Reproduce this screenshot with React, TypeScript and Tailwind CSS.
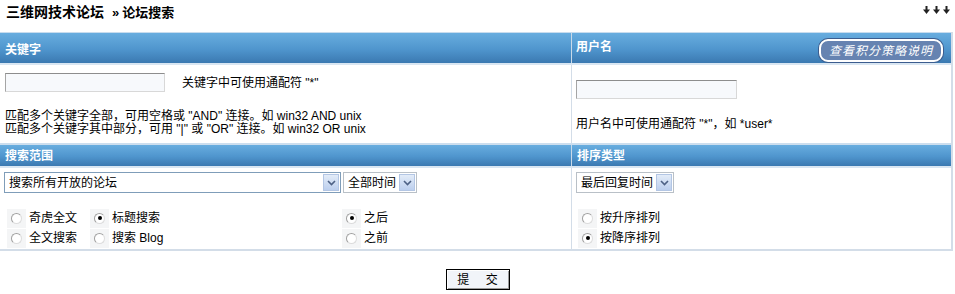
import React from "react";

const font = "font-['Liberation_Sans','Noto_Sans_CJK_SC',sans-serif]";

function Chevron() {
  return (
    <svg width="9" height="6" viewBox="0 0 9 6">
      <polyline points="1,1 4.5,4.5 8,1" fill="none" stroke="#4d6185" strokeWidth="1.6" />
    </svg>
  );
}

function Select({ w, label, dark }: { w: number; label: string; dark?: boolean }) {
  return (
    <div
      className={`flex h-[21px] items-stretch border bg-white ${dark ? "border-[#7f9db9]" : "border-[#b9c0c7]"}`}
      style={{ width: w }}
    >
      <div className="flex flex-1 items-center pl-[4px] text-[12px] leading-none text-black">{label}</div>
      <div className="m-[1px] flex w-[16px] items-center justify-center border border-[#b3c6e4] bg-[linear-gradient(#e3ecf8,#bccfee)]">
        <Chevron />
      </div>
    </div>
  );
}

function Radio({ checked, label }: { checked?: boolean; label: string }) {
  return (
    <div className="flex h-[20px] items-center">
      <div className="flex h-[19px] w-[19px] items-center justify-center bg-[#f4f5f6]">
        <div className="flex h-[11px] w-[11px] items-center justify-center rounded-full border border-t-[#a0a0a0] border-l-[#a0a0a0] border-r-[#dcdcdc] border-b-[#dcdcdc] bg-white">
          {checked && <div className="h-[4px] w-[4px] rounded-full bg-black" />}
        </div>
      </div>
      <span className="ml-[3px] text-[12px] leading-none text-black">{label}</span>
    </div>
  );
}

function Input({ w }: { w: number }) {
  return (
    <div
      className="h-[19px] border border-t-[#8d8d8d] border-l-[#a5a5a5] border-r-[#d8d8d8] border-b-[#d8d8d8] bg-[#f7f9fc]"
      style={{ width: w }}
    />
  );
}

const barBg = "bg-[linear-gradient(#68addf,#4f95cd_55%,#3b79b1)]";

export default function App() {
  return (
    <div className={`relative h-[294px] w-[955px] overflow-hidden bg-white text-[12px] text-black ${font}`}>
      {/* title */}
      <div className="flex h-[32px] items-start justify-between pl-[6px] pr-[5px] pt-[4px]">
        <div className="flex items-baseline font-bold leading-[16px]">
          <span className="text-[14px]">三维网技术论坛</span>
          <span className="ml-[8px] text-[13px]">»</span>
          <span className="ml-[3px] text-[13px]">论坛搜索</span>
        </div>
        <div className="mt-[2px] flex gap-[3px]">
          {[0, 1, 2].map((i) => (
            <svg key={i} width="7" height="8" viewBox="0 0 7 8">
              <rect x="2.5" y="0" width="2" height="4" fill="#222" />
              <polygon points="0,3.5 7,3.5 3.5,8" fill="#222" />
            </svg>
          ))}
        </div>
      </div>

      {/* table */}
      <div className="w-[953px] border-r-2 border-[#d3dde8]">
        {/* header row 1 */}
        <div className="flex h-[33px] border-t border-[#c8dcee] border-b-2 border-b-[#d9e6f2]">
          <div className={`flex w-[571px] items-center pl-[5px] pt-[4px] ${barBg}`}>
            <span className="text-[12px] font-bold text-white">关键字</span>
          </div>
          <div className={`flex flex-1 items-start justify-between border-l border-[#c9d9e8] pl-[4px] pr-[8px] ${barBg}`}>
            <span className="mt-[5px] text-[12px] font-bold text-white">用户名</span>
            <div className="mt-[6px] flex h-[23px] w-[124px] items-center justify-center rounded-[9px] border-2 border-white bg-[#6683b1] shadow-[0_0_0_1px_#3c5d8f]">
              <span className="text-[12px] italic text-white tracking-[1px]">查看积分策略说明</span>
            </div>
          </div>
        </div>

        {/* body row 1 */}
        <div className="flex h-[78px]">
          <div className="w-[571px] pl-[5px] pt-[8px]">
            <div className="flex items-center">
              <Input w={160} />
              <span className="ml-[17px]">关键字中可使用通配符 "*"</span>
            </div>
            <div className="mt-[18px] leading-[13px]">
              <div>匹配多个关键字全部，可用空格或 "AND" 连接。如 win32 AND unix</div>
              <div>匹配多个关键字其中部分，可用 "|" 或 "OR" 连接。如 win32 OR unix</div>
            </div>
          </div>
          <div className="flex-1 border-l border-[#d3dde8] pl-[4px] pt-[15px]">
            <Input w={161} />
            <div className="mt-[16px]">用户名中可使用通配符 "*"，如 *user*</div>
          </div>
        </div>

        {/* header row 2 */}
        <div className="flex h-[25px] border-t-2 border-[#ccdeee] border-b-2 border-b-[#d9e6f2]">
          <div className={`flex w-[571px] items-center pl-[5px] ${barBg}`}>
            <span className="text-[12px] font-bold text-white">搜索范围</span>
          </div>
          <div className={`flex flex-1 items-center border-l border-[#c9d9e8] pl-[5px] ${barBg}`}>
            <span className="text-[12px] font-bold text-white">排序类型</span>
          </div>
        </div>

        {/* body row 2 */}
        <div className="flex h-[83px] border-b-2 border-[#d3dde8]">
          <div className="w-[571px] pl-[4px] pt-[4px]">
            <div className="flex gap-[2px]">
              <Select w={337} label="搜索所有开放的论坛" dark />
              <Select w={74} label="全部时间" />
            </div>
            <div className="mt-[15px] flex">
              <div className="w-[86px] pl-[3px]">
                <Radio label="奇虎全文" />
                <Radio label="全文搜索" />
              </div>
              <div className="w-[252px]">
                <Radio checked label="标题搜索" />
                <Radio label="搜索 Blog" />
              </div>
              <div>
                <Radio checked label="之后" />
                <Radio label="之前" />
              </div>
            </div>
          </div>
          <div className="flex-1 border-l border-[#d3dde8] pl-[4px] pt-[4px]">
            <Select w={98} label="最后回复时间" />
            <div className="mt-[15px] pl-[2px]">
              <Radio label="按升序排列" />
              <Radio checked label="按降序排列" />
            </div>
          </div>
        </div>
      </div>

      {/* submit */}
      <div className="mt-[18px] flex justify-center">
        <button className="flex h-[21px] w-[64px] items-center justify-center border border-black bg-[#f1f4f9] shadow-[inset_1px_1px_0_#ffffff,inset_-1px_-1px_0_#9a9a9a] text-[12px] leading-none text-black">
          提&nbsp;&nbsp;&nbsp;&nbsp;&nbsp;交
        </button>
      </div>
    </div>
  );
}
